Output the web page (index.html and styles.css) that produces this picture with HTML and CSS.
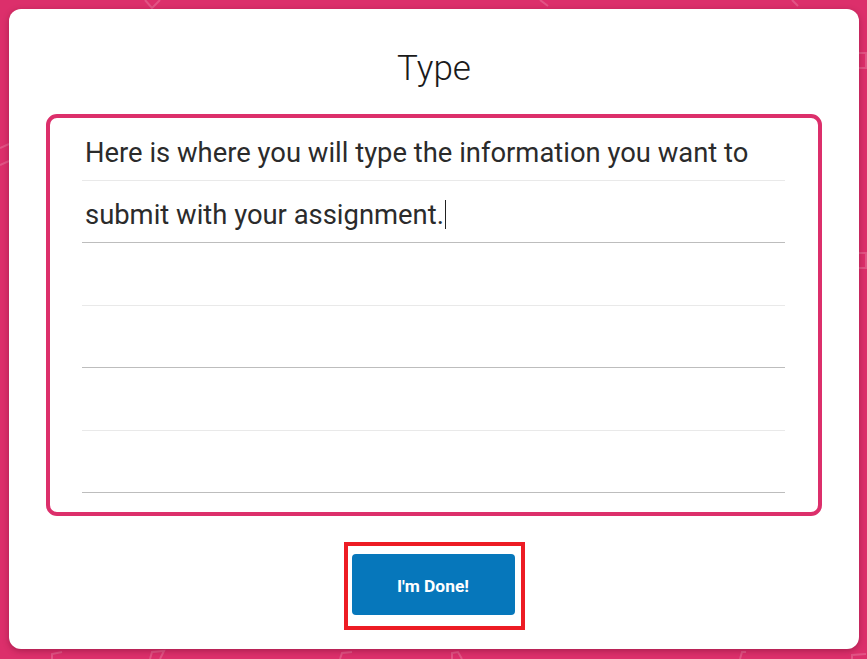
FILE: index.html
```html
<!DOCTYPE html>
<html>
<head>
<meta charset="utf-8">
<link rel="stylesheet" href="styles.css">
</head>
<body>
<svg class="bg" width="867" height="659" viewBox="0 0 867 659">
  <g fill="none" stroke="rgba(255,255,255,0.18)" stroke-width="2">
    <path d="M145 0 L152 8 L160 0"/>
    <path d="M0 148 L9 144"/>
    <path d="M0 165 L9 161"/>
    <path d="M858 53 L866 53 L866 68 L858 68"/>
    <path d="M858 253 L866 253 L866 268 L858 268"/>
    <path d="M52 659 L52 654 L62 652"/>
    <path d="M150 659 L152 652 L164 651 L160 659"/>
    <path d="M340 659 L342 653 L352 652"/>
    <path d="M452 659 L452 653 L458 652 L462 659"/>
    <path d="M740 659 L742 652 L746 652"/>
    <path d="M852 659 L852 655 L866 654"/>
    <path d="M540 0 L548 6"/>
    <path d="M792 0 L798 6"/>
  </g>
</svg>
<main class="card">
  <h1 class="title">Type</h1>
  <div class="editor">
    <div class="row"><span class="txt">Here is where you will type the information you want to</span></div>
    <div class="row dark"><span class="txt">submit with your assignment.<span class="caret"></span></span></div>
    <div class="row"></div>
    <div class="row dark"></div>
    <div class="row"></div>
    <div class="row dark"></div>
  </div>
  <div class="actions">
    <div class="focus-ring">
      <button class="done">I'm Done!</button>
    </div>
  </div>
</main>
</body>
</html>
```

FILE: styles.css
```css
html, body {
  margin: 0;
  padding: 0;
}
body {
  width: 867px;
  height: 659px;
  background: #dc2f6b;
  font-family: Roboto, "Liberation Sans", sans-serif;
  position: relative;
  overflow: hidden;
}
.bg {
  position: absolute;
  left: 0;
  top: 0;
}
.card {
  position: relative;
  margin: 9px 8px 0 9px;
  height: 640px;
  background: #fff;
  border-radius: 12px;
  box-shadow: 0 2px 6px rgba(80, 0, 30, 0.35);
  box-sizing: border-box;
  padding: 42px 37px 0 37px;
  display: flex;
  flex-direction: column;
}
.title {
  margin: 0;
  text-align: center;
  font-weight: 300;
  font-size: 35px;
  line-height: 36px;
  color: #1a1a1a;
}
.editor {
  margin-top: 27px;
  border: 4px solid #dc2f6b;
  border-radius: 11px;
  padding: 0 33px 19px 32px;
  display: flex;
  flex-direction: column;
}
.row {
  height: 62.5px;
  box-sizing: border-box;
  border-bottom: 1px solid #e9e9e9;
  display: flex;
  align-items: flex-end;
  padding: 0 0 12px 3px;
}
.row.dark {
  border-bottom-color: #bdbdbd;
}
.txt {
  font-size: 27.4px;
  line-height: 30px;
  color: #2b2b2b;
  white-space: nowrap;
  position: relative;
}
.caret {
  display: inline-block;
  width: 1px;
  height: 29px;
  background: #222;
  vertical-align: -5px;
  margin-left: 1px;
}
.actions {
  display: flex;
  justify-content: center;
  margin-top: 26px;
}
.focus-ring {
  border: 4px solid #ed1c24;
  padding: 8px 6px 11px 4px;
  display: flex;
}
.done {
  width: 163px;
  height: 61px;
  border: none;
  border-radius: 4px;
  background: #0677bb;
  color: #fff;
  font-family: Roboto, "Liberation Sans", sans-serif;
  font-weight: 700;
  font-size: 17.4px;
  padding: 3px 0 0 0;
}
```
